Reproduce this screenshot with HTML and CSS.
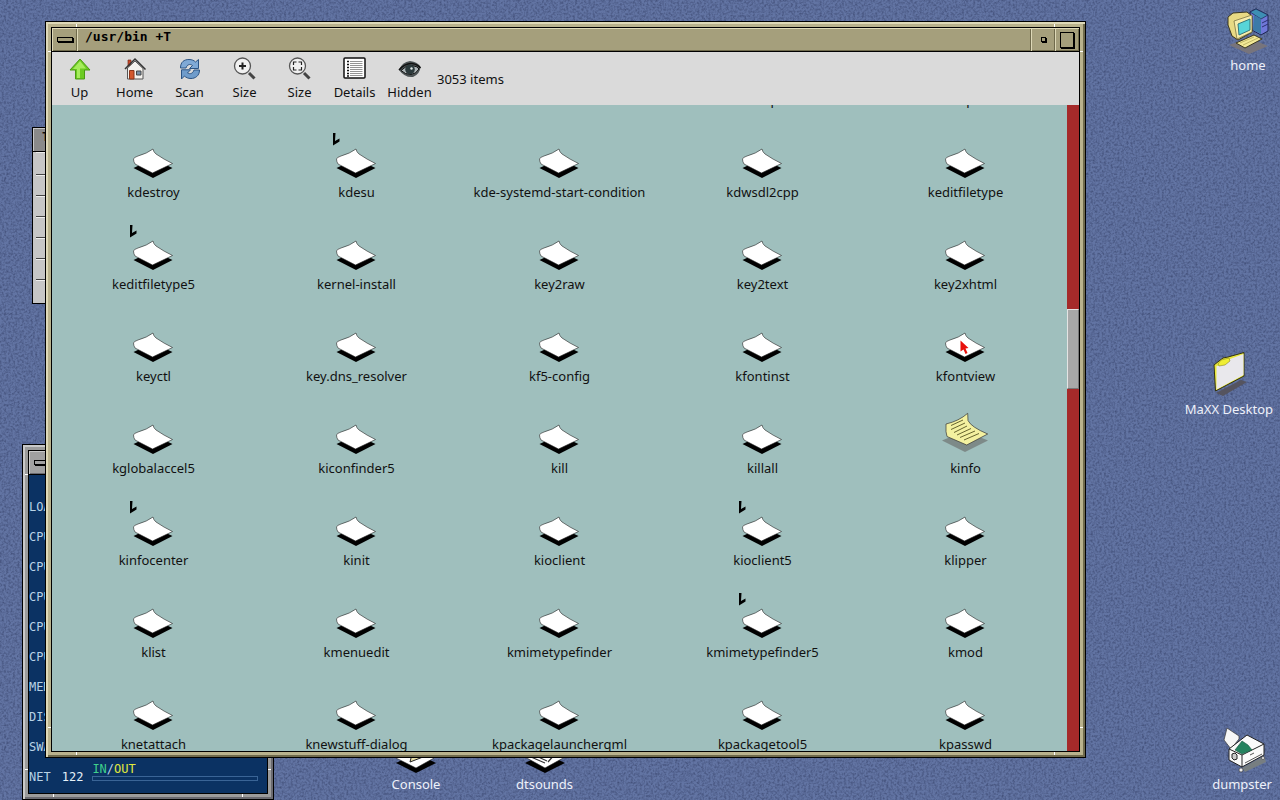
FILE: index.html
```html
<!DOCTYPE html>
<html lang="en">
<head>
    <meta charset="UTF-8">
    <meta name="viewport" content="width=device-width, initial-scale=1.0">
    <title>/usr/bin</title>
    <link rel="stylesheet" href="styles.css">
</head>
<body>
    <!-- shared icons -->
    <svg class="defs" aria-hidden="true">
        <symbol id="exec" viewBox="0 0 56 48">
            <path d="M7.500 37 L27 28 L46.500 37 L27 47 Z" fill="#000"/>
            <path d="M27 18 Q21 22.500 12 25 Q7.500 26.500 7.500 28 Q7.500 30.500 9 33 L26.500 42 L46.500 32.500 Q38 28.500 30 23 Q27.500 21 27 18 Z" fill="#fff" stroke="#222" stroke-width=".6"/>
        </symbol>
        <symbol id="doc" viewBox="0 0 56 48">
            <path d="M4 33.500 L27 24 L50 33.500 L27 45 Z" fill="#7d8a88"/>
            <path d="M8 17 Q21 14 29.700 6.300 L30 13.500 Q33 20 49.700 27 L28.700 38 L9 29.500 Q7.500 26 8 17 Z" fill="#f3f1a0" stroke="#333" stroke-width=".7"/>
            <path d="M13 18.500 L25 13 M13 22.500 L27 16 M16 25.500 L29 19 M19 28 L33 21.500 M22 30.500 L37 24 M26 33 L41 26.500" stroke="#66642f" stroke-width="1"/>
        </symbol>
        <symbol id="link" viewBox="0 0 8 14">
            <path d="M1 1 H3.500 L3 9 L7.500 6.500 V9.500 L1 13.500 Z" fill="#000"/>
        </symbol>
    </svg>

    <main class="desktop">
        <svg class="grain" aria-hidden="true">
            <filter id="noise" color-interpolation-filters="sRGB">
                <feTurbulence type="fractalNoise" baseFrequency=".45" numOctaves="2" seed="4"/>
                <feColorMatrix values="0 0 0 0 .24  0 0 0 0 .29  0 0 0 0 .45  1.600 0 0 0 -.6"/>
            </filter>
            <rect width="100%" height="100%" filter="url(#noise)"/>
        </svg>

        <a href="#" class="shortcut home">
            <svg viewBox="0 0 56 56" width="56" height="56" aria-hidden="true">
                <path d="M9 45 L29 38 L48 46 L29 54 Z" fill="#77747c"/>
                <path d="M30 12 L36 9 L48 15 V31 L41 35 L32 30 Z" fill="#6f78d8" stroke="#1c2350"/>
                <path d="M30 12 L36 9 L48 15 L41 19 Z" fill="#3d8fb4" stroke="#1c2350" stroke-width=".7"/>
                <path d="M34 15 L41 19 V34 L33 30 Z" fill="#3b7aa8"/>
                <path d="M42 23 L48 20 M42 27 L48 24" stroke="#2c3270"/>
                <path d="M8 17 L13 13 L27 12 L32 16 V32 L18 40 L12 36 L8 25 Z" fill="#e8da84" stroke="#3b3720"/>
                <path d="M14 21 L32 15 V32 L17 39 Z" fill="#f6edab" stroke="#6b6435" stroke-width=".7"/>
                <path d="M18 24 L30 19 V30 L19 35 Z" fill="#57d5d8" stroke="#33777b"/>
                <path d="M16 43 L34 35 L42 39 L25 48 Z" fill="#f2e896" stroke="#3b3720"/>
                <path d="M20 43 L34 37 M23 45 L38 38" stroke="#b4a95c" stroke-width=".8"/>
            </svg>
            <span>home</span>
        </a>
        <a href="#" class="shortcut maxx">
            <svg viewBox="0 0 56 56" width="56" height="56" aria-hidden="true">
                <path d="M15 49 L40 36 L46 38 L22 52 Z" fill="#55545f"/>
                <path d="M13 21 L18 17 L22 14 L27 13 L43 8.500 V32 L14.500 47 Z" fill="#e9e93a" stroke="#333311"/>
                <path d="M15.500 22 L20 21 L26 19 L29 15 L42.500 10 V31 L15.500 45.500 Z" fill="#e9e8ec"/>
                <path d="M17 20 L20 16 L28 14 L29 17 L24 21 L18 22 Z" fill="#efee34" stroke="#77751b" stroke-width=".5"/>
            </svg>
            <span>MaXX Desktop</span>
        </a>
        <a href="#" class="shortcut dumpster">
            <svg viewBox="0 0 56 56" width="56" height="56" aria-hidden="true">
                <path d="M28 49 L50 37 L52 43 L31 53 Z" fill="#777e81"/>
                <path d="M10 21 L13 9 L25 17 L25 20 L17 30 Z" fill="#f6f6f6" stroke="#333" stroke-width=".7"/>
                <path d="M15 30 L33 16 L50 25 V36 L28 48 L15 41 Z" fill="#fafafa" stroke="#222"/>
                <path d="M15 30 L28 36 L50 25 M28 36 V48" fill="none" stroke="#222"/>
                <path d="M21 31 L28 22 L34 26 L38 31 L28 35 Z" fill="#24825e" stroke="#14563f" stroke-width=".6"/>
                <path d="M18 35 L21 34 L23 36 V40 L20 41 L18 39 Z" fill="#ccc" stroke="#222"/>
                <path d="M31 44 L48 35 M36 36 L40 34" stroke="#555"/>
                <circle cx="27" cy="51" r="2" fill="#eee" stroke="#333" stroke-width=".6"/>
                <circle cx="49" cy="39" r="1.500" fill="#eee" stroke="#333" stroke-width=".6"/>
            </svg>
            <span>dumpster</span>
        </a>
        <a href="#" class="shortcut console">
            <svg viewBox="0 0 56 48" width="56" height="48" aria-hidden="true">
                <path d="M8 36 L28 26 L48 36 L28 46 Z" fill="#000"/>
                <path d="M8 31 L28 20 L46 31 L28 41 Z" fill="#fff" stroke="#222" stroke-width=".6"/>
                <path d="M22 35 L24 27 L35 30 Z" fill="#e8e0a8" stroke="#222"/>
            </svg>
            <span>Console</span>
        </a>
        <a href="#" class="shortcut dtsounds">
            <svg viewBox="0 0 56 48" width="56" height="48" aria-hidden="true">
                <path d="M8 36 L28 26 L48 36 L28 46 Z" fill="#000"/>
                <path d="M8 30 L28 19 L48 30 L28 41 Z" fill="#fff" stroke="#222" stroke-width=".6"/>
                <path d="M14 30 L28 36 M17 28 L30 34 M31 35 L38 27" stroke="#333" stroke-width="1.200"/>
            </svg>
            <span>dtsounds</span>
        </a>

        <section class="toolchest" aria-label="Toolchest">
            <h2>Toolchest</h2>
            <ul>
                <li></li><li></li><li></li><li></li><li></li><li></li><li></li>
            </ul>
        </section>

        <section class="window osview" aria-label="System load">
            <div class="inner">
                <header class="titlebar">
                    <button class="title-button menu" aria-label="Window menu"><i></i></button>
                </header>
                <ul class="meters">
                    <li>LOAD</li>
                    <li>CPU0</li>
                    <li>CPU1</li>
                    <li>CPU2</li>
                    <li>CPU3</li>
                    <li>CPU4</li>
                    <li>MEM</li>
                    <li>DISK</li>
                    <li>SWAP</li>
                    <li class="net">
                        <span>NET</span>
                        <b>122</b>
                        <div class="meter">
                            <span><em>IN</em>/<strong>OUT</strong></span>
                            <div class="bar"></div>
                        </div>
                    </li>
                </ul>
            </div>
        </section>

        <section class="window files" aria-label="/usr/bin">
            <div class="inner">
                <header class="titlebar">
                    <button class="title-button menu" aria-label="Window menu"><i></i></button>
                    <h1>/usr/bin +T</h1>
                    <button class="title-button minimize" aria-label="Minimize"><i></i></button>
                    <button class="title-button maximize" aria-label="Maximize"><i></i></button>
                </header>

                <nav class="toolbar">
                    <button>
                        <svg viewBox="0 0 24 24" width="24" height="24" aria-hidden="true">
                            <path d="M12 2 L22 13 H16.500 V22 H7.500 V13 H2 Z" fill="#6ccb22" stroke="#4a9a12"/>
                            <path d="M12 4 L18 11.500 H12 V21 H9 V12 H5 Z" fill="#a6ec5c"/>
                        </svg>
                        Up
                    </button>
                    <button>
                        <svg viewBox="0 0 24 24" width="24" height="24" aria-hidden="true">
                            <path d="M5 3 H8 V9 H5 Z" fill="#c8492a" stroke="#742a18" stroke-width=".7"/>
                            <path d="M4.500 11 L12 4 L20 11.500 V22 H4.500 Z" fill="#f4f2ee" stroke="#555"/>
                            <path d="M2 12 L12 2 L22.500 12.500" fill="none" stroke="#333" stroke-width="1.500"/>
                            <path d="M6.500 13.500 H11 V22 H6.500 Z" fill="#d2572d" stroke="#8b351a"/>
                            <path d="M13.500 14 H18 V18 H13.500 Z" fill="#7a91a8" stroke="#444"/>
                        </svg>
                        Home
                    </button>
                    <button>
                        <svg viewBox="0 0 24 24" width="24" height="24" aria-hidden="true">
                            <path d="M2.500 11 C2.500 5 6 2.500 11 2.500 C14 2.500 16 3.500 17.500 5 L20.500 2.500 V11.500 H11.500 L14.500 8.500 C12 6.500 9 7.500 8 11 Z" fill="#7fa9d6" stroke="#2c5484"/>
                            <path d="M21.500 13 C21.500 19 17 21.500 13 21.500 C10 21.500 8 20.500 6.500 19 L3.500 22 V12.800 H12.500 L9.500 16 C12 17.500 15 16.500 16 13 Z" fill="#6f9ccb" stroke="#2c5484"/>
                        </svg>
                        Scan
                    </button>
                    <button>
                        <svg viewBox="0 0 24 24" width="24" height="24" aria-hidden="true">
                            <path d="M16 16 L21.500 21.500" stroke="#444" stroke-width="3"/>
                            <circle cx="9.500" cy="9" r="8" fill="#f1f1f1" stroke="#555" stroke-width="1.300"/>
                            <path d="M9.500 5.500 V12.500 M6 9 H13" stroke="#222" stroke-width="2"/>
                        </svg>
                        Size
                    </button>
                    <button>
                        <svg viewBox="0 0 24 24" width="24" height="24" aria-hidden="true">
                            <path d="M16 16 L21.500 21.500" stroke="#444" stroke-width="3"/>
                            <circle cx="9.500" cy="9" r="8" fill="#f1f1f1" stroke="#555" stroke-width="1.300"/>
                            <path d="M5.500 8 V5 H8.500 M10.500 5 H13.500 V8 M13.500 10 V13 H10.500 M8.500 13 H5.500 V10" fill="none" stroke="#222" stroke-width="1.200"/>
                        </svg>
                        Size
                    </button>
                    <button>
                        <svg viewBox="0 0 24 24" width="24" height="24" aria-hidden="true">
                            <rect x="1" y="1" width="21" height="20" rx="1" fill="#fff" stroke="#111" stroke-width="1.500"/>
                            <path d="M4 4.500 H6 M4 7.500 H6 M4 10.500 H6 M4 13.500 H6 M4 16.500 H6 M4 19 H6" stroke="#111" stroke-width="1.300"/>
                            <path d="M7 4.500 H19.500 M7 6.500 H19.500 M7 8.500 H19.500 M7 10.500 H19.500 M7 12.500 H19.500 M7 14.500 H19.500 M7 16.500 H19.500 M7 18.500 H19.500" stroke="#888" stroke-width=".9"/>
                        </svg>
                        Details
                    </button>
                    <button>
                        <svg viewBox="0 0 24 24" width="24" height="24" aria-hidden="true">
                            <path d="M1 13 Q4 5 12 4 Q20 5 22.500 10 Q22 17 15 20 Q7 21 1 13 Z" fill="#4d5456"/>
                            <path d="M3 13.500 Q8 8 14 8.500 Q20 9.500 21 12 Q18 17 13 17.500 Q7 17.500 3 13.500 Z" fill="#aeb6b8" stroke="#111"/>
                            <circle cx="12" cy="12.500" r="4.800" fill="#2c3a3c"/>
                            <circle cx="13.500" cy="11.500" r="1.200" fill="#dfe8e8"/>
                            <path d="M1 13 Q7 6 14 6.500 Q20 7.500 22.500 11" fill="none" stroke="#111" stroke-width="1.500"/>
                        </svg>
                        Hidden
                    </button>
                    <span class="count">3053 items</span>
                </nav>

                <div class="pane">
                    <ul class="listing">
                        <li></li>
                        <li></li>
                        <li></li>
                        <li><svg class="icon"><use href="#exec"/></svg>kdesuper</li>
                        <li><svg class="icon"><use href="#exec"/></svg>kdespool</li>

                        <li><svg class="icon"><use href="#exec"/></svg>kdestroy</li>
                        <li><svg class="icon"><use href="#exec"/></svg><svg class="badge"><use href="#link"/></svg>kdesu</li>
                        <li><svg class="icon"><use href="#exec"/></svg>kde-systemd-start-condition</li>
                        <li><svg class="icon"><use href="#exec"/></svg>kdwsdl2cpp</li>
                        <li><svg class="icon"><use href="#exec"/></svg>keditfiletype</li>

                        <li><svg class="icon"><use href="#exec"/></svg><svg class="badge"><use href="#link"/></svg>keditfiletype5</li>
                        <li><svg class="icon"><use href="#exec"/></svg>kernel-install</li>
                        <li><svg class="icon"><use href="#exec"/></svg>key2raw</li>
                        <li><svg class="icon"><use href="#exec"/></svg>key2text</li>
                        <li><svg class="icon"><use href="#exec"/></svg>key2xhtml</li>

                        <li><svg class="icon"><use href="#exec"/></svg>keyctl</li>
                        <li><svg class="icon"><use href="#exec"/></svg>key.dns_resolver</li>
                        <li><svg class="icon"><use href="#exec"/></svg>kf5-config</li>
                        <li><svg class="icon"><use href="#exec"/></svg>kfontinst</li>
                        <li>
                            <svg class="icon"><use href="#exec"/></svg>kfontview
                            <svg class="pointer" viewBox="0 0 9 15" aria-hidden="true"><path d="M.5 .5 L8.500 8 L5.500 8.500 L7.500 13 L5.500 14 L3.500 9.500 L.5 11.500 Z" fill="#e8100c"/></svg>
                        </li>

                        <li><svg class="icon"><use href="#exec"/></svg>kglobalaccel5</li>
                        <li><svg class="icon"><use href="#exec"/></svg>kiconfinder5</li>
                        <li><svg class="icon"><use href="#exec"/></svg>kill</li>
                        <li><svg class="icon"><use href="#exec"/></svg>killall</li>
                        <li><svg class="icon"><use href="#doc"/></svg>kinfo</li>

                        <li><svg class="icon"><use href="#exec"/></svg><svg class="badge"><use href="#link"/></svg>kinfocenter</li>
                        <li><svg class="icon"><use href="#exec"/></svg>kinit</li>
                        <li><svg class="icon"><use href="#exec"/></svg>kioclient</li>
                        <li><svg class="icon"><use href="#exec"/></svg><svg class="badge"><use href="#link"/></svg>kioclient5</li>
                        <li><svg class="icon"><use href="#exec"/></svg>klipper</li>

                        <li><svg class="icon"><use href="#exec"/></svg>klist</li>
                        <li><svg class="icon"><use href="#exec"/></svg>kmenuedit</li>
                        <li><svg class="icon"><use href="#exec"/></svg>kmimetypefinder</li>
                        <li><svg class="icon"><use href="#exec"/></svg><svg class="badge"><use href="#link"/></svg>kmimetypefinder5</li>
                        <li><svg class="icon"><use href="#exec"/></svg>kmod</li>

                        <li><svg class="icon"><use href="#exec"/></svg>knetattach</li>
                        <li><svg class="icon"><use href="#exec"/></svg>knewstuff-dialog</li>
                        <li><svg class="icon"><use href="#exec"/></svg>kpackagelauncherqml</li>
                        <li><svg class="icon"><use href="#exec"/></svg>kpackagetool5</li>
                        <li><svg class="icon"><use href="#exec"/></svg>kpasswd</li>
                    </ul>
                    <div class="scrollbar"><div class="thumb"></div></div>
                </div>
            </div>
        </section>
    </main>
</body>
</html>
```

FILE: styles.css
```css
* {
    box-sizing: border-box;
}
body {
    margin: 0;
    font-family: "Noto Sans", sans-serif;
    font-size: 13px;
    line-height: 18px;
    color: #111;
}
ul {
    list-style: none;
    margin: 0;
    padding: 0;
}
h1, h2 {
    margin: 0;
}
button {
    font: inherit;
    color: inherit;
    border: none;
    padding: 0;
    background: none;
}
.defs {
    display: none;
}

/* desktop */
.desktop {
    position: relative;
    height: 100vh;
    overflow: hidden;
    background: #6274a3;
}
.grain {
    position: absolute;
    inset: 0;
    width: 100%;
    height: 100%;
}
.shortcut {
    position: absolute;
    display: flex;
    flex-direction: column;
    align-items: center;
    color: #eef1fa;
    text-decoration: none;
}
.home {
    top: 0;
    right: 4px;
}
.maxx {
    top: 344px;
    right: 7px;
}
.dumpster {
    bottom: 7px;
    right: 8px;
}
.console {
    left: 388px;
    bottom: 7px;
}
.dtsounds {
    left: 516px;
    bottom: 7px;
}

/* window frames */
.window {
    --face: #a59f7c;
    --light: #ded9b8;
    --mid: #b9b28d;
    --dark: #6f6a4c;
    position: absolute;
    border: 1px solid #000;
    padding: 5px;
    /* corner notches on each side of the frame */
    background:
        linear-gradient(#fff, #fff) 30px 0 / 1px 5px no-repeat,
        linear-gradient(#fff, #fff) right 30px top 0 / 1px 5px no-repeat,
        linear-gradient(#fff, #fff) 30px 100% / 1px 5px no-repeat,
        linear-gradient(#fff, #fff) right 30px bottom 0 / 1px 5px no-repeat,
        linear-gradient(#fff, #fff) 0 29px / 5px 1px no-repeat,
        linear-gradient(#fff, #fff) 100% 29px / 5px 1px no-repeat,
        linear-gradient(#fff, #fff) left 0 bottom 29px / 5px 1px no-repeat,
        linear-gradient(#fff, #fff) right 0 bottom 29px / 5px 1px no-repeat,
        var(--mid);
    box-shadow: inset 2px 2px 0 var(--light), inset -2px -2px 0 var(--dark);
}
.inner {
    height: 100%;
    display: flex;
    flex-direction: column;
    border: 1px solid #000;
}
.titlebar {
    flex: none;
    height: 24px;
    display: flex;
    background: var(--face);
    border-bottom: 1px solid #000;
}
.titlebar h1 {
    flex: 1;
    padding: 0 8px;
    color: #000;
    font: bold 13px/18px "DejaVu Sans Mono", monospace;
    box-shadow: inset 1px 1px 0 var(--light), inset -1px -1px 0 var(--dark);
}
.title-button {
    width: 24px;
    display: flex;
    align-items: center;
    justify-content: center;
    box-shadow: inset 1px 1px 0 var(--light), inset -1px -1px 0 var(--dark);
}
.title-button i {
    border: 1px solid #000;
    box-shadow: 1px 1px 0 #000;
}
.title-button.menu {
    width: 25px;
}
.menu i {
    width: 16px;
    height: 5px;
}
.minimize i {
    width: 5px;
    height: 5px;
}
.maximize i {
    width: 14px;
    height: 16px;
}

/* file manager */
.files {
    left: 45px;
    right: 194px;
    top: 21px;
    bottom: 42px;
}
.toolbar {
    flex: none;
    height: 53px;
    display: flex;
    align-items: center;
    background: #dadada;
}
.toolbar button {
    width: 55px;
    display: flex;
    flex-direction: column;
    align-items: center;
    gap: 2px;
}
.pane {
    flex: 1;
    min-height: 0;
    display: flex;
    overflow: hidden;
    background: #9fbfbd;
}
/* scrolled down: only the foot of the first row shows */
.listing {
    flex: 1;
    display: grid;
    grid-template-columns: repeat(5, 1fr);
    grid-auto-rows: 92px;
    margin-top: -84px;
}
.listing li {
    position: relative;
    display: flex;
    flex-direction: column;
    align-items: center;
    gap: 4px;
    padding-top: 18px;
    white-space: nowrap;
}
.icon {
    flex: none;
    width: 56px;
    height: 48px;
}
.badge {
    position: absolute;
    top: 19px;
    left: calc(50% - 25px);
    width: 8px;
    height: 14px;
}
.pointer {
    position: absolute;
    top: 43px;
    left: calc(50% - 6px);
    width: 9px;
    height: 15px;
}
.scrollbar {
    width: 12px;
    display: flex;
    flex-direction: column;
    background: #a52a2a;
}
.scrollbar::before {
    content: "";
    flex: 204;
}
.scrollbar::after {
    content: "";
    flex: 362;
}
.thumb {
    flex: 78;
    background: #a8a8a8;
    border: 1px solid #e4e4e4;
    border-right-color: #777;
    border-bottom-color: #777;
}

/* toolchest */
.toolchest {
    position: absolute;
    left: 32px;
    top: 127px;
    width: 110px;
    border: 1px solid #000;
    background: #c6c6c6;
}
.toolchest h2 {
    height: 24px;
    padding-left: 9px;
    font: bold 12px/18px "DejaVu Sans Mono", monospace;
    background: #8a8a8a;
    border-bottom: 1px solid #000;
    box-shadow: inset 1px 1px 0 #c8c8c8;
}
.toolchest li {
    height: 21px;
    margin: 0 3px;
    border-top: 1px solid #eee;
    border-bottom: 1px solid #444;
}
.toolchest li:first-child,
.toolchest li:last-child {
    height: 23px;
}
.toolchest li:last-child {
    border-bottom: none;
}

/* system load monitor */
.osview {
    --face: #a0a0a0;
    --light: #c9c9c9;
    --mid: #9b9b9b;
    --dark: #6a6a70;
    left: 22px;
    top: 444px;
    bottom: 0;
    width: 252px;
}
.meters {
    flex: 1;
    padding-top: 17px;
    background: #0b3263;
    color: #b9d3e6;
    font: 12px/30px "DejaVu Sans Mono", monospace;
}
.meters li {
    height: 30px;
}
.net {
    display: flex;
    gap: 11px;
}
.net b {
    font-weight: normal;
    color: #e6f0f8;
}
.meter {
    flex: 1;
    margin: 0 9px 0 -2px;
    line-height: 14px;
}
.meter em {
    font-style: normal;
    color: #3fd08c;
}
.meter strong {
    font-weight: normal;
    color: #e2ea3c;
}
.bar {
    height: 5px;
    border: 1px solid #3a6496;
}
```
